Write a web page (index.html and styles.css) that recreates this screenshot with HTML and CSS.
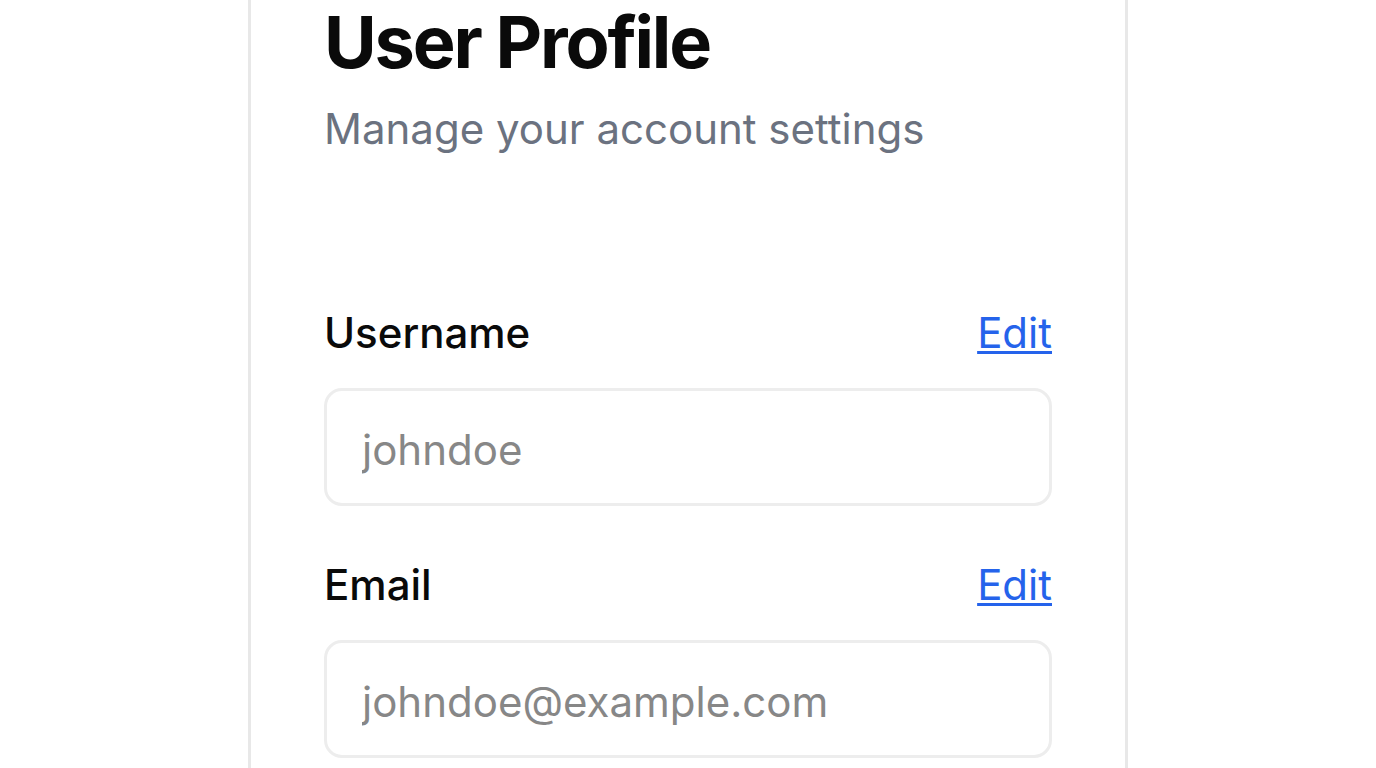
FILE: index.html
```html
<!DOCTYPE html>
<html lang="en">
<head>
<meta charset="utf-8">
<title>User Profile</title>
<link rel="stylesheet" href="styles.css">
</head>
<body>
<main class="card">
  <header class="head">
    <h1 class="title">User Profile</h1>
    <p class="subtitle">Manage your account settings</p>
  </header>
  <form class="form">
    <div class="field">
      <div class="field-row">
        <label class="label" for="username">Username</label>
        <a class="edit" href="#">Edit</a>
      </div>
      <input class="input" id="username" type="text" placeholder="johndoe">
    </div>
    <div class="field">
      <div class="field-row">
        <label class="label" for="email">Email</label>
        <a class="edit" href="#">Edit</a>
      </div>
      <input class="input" id="email" type="email" placeholder="johndoe@example.com">
    </div>
  </form>
</main>
</body>
</html>
```

FILE: styles.css
```css
* { box-sizing: border-box; }
html, body { margin: 0; padding: 0; background: #ffffff; }
body {
  font-family: Inter, "Noto Sans", "Liberation Sans", sans-serif;
  color: #0a0a0a;
  overflow: hidden;
  height: 768px;
}
.card {
  width: 880px;
  margin: -40px auto 0;
  padding: 43px 73px 60px;
  border: 3px solid #e8e8e8;
  border-radius: 20px;
  background: #fff;
  min-height: 900px;
}
.head { margin-bottom: 141px; }
.title {
  margin: 0;
  font-size: 72px;
  line-height: 72px;
  font-weight: 700;
  letter-spacing: -0.03em;
  color: #0a0a0a;
}
.subtitle {
  margin: 19px 0 0;
  font-size: 42px;
  line-height: 63px;
  color: #6b7280;
}
.form { display: flex; flex-direction: column; gap: 47px; }
.field { display: flex; flex-direction: column; gap: 24px; }
.field-row {
  display: flex;
  justify-content: space-between;
  align-items: center;
}
.label {
  font-size: 42px;
  line-height: 63px;
  font-weight: 500;
  color: #0a0a0a;
}
.edit {
  font-size: 42px;
  line-height: 63px;
  color: #2563eb;
  text-decoration: underline;
  text-decoration-thickness: 3px;
  text-underline-offset: 3px;
}
.input {
  width: 100%;
  height: 118px;
  padding: 4px 35px 0;
  border: 3px solid #ededed;
  border-radius: 18px;
  font-family: inherit;
  font-size: 42px;
  color: #0a0a0a;
  background: #fff;
  outline: none;
}
.input::placeholder { color: #878787; }
```
